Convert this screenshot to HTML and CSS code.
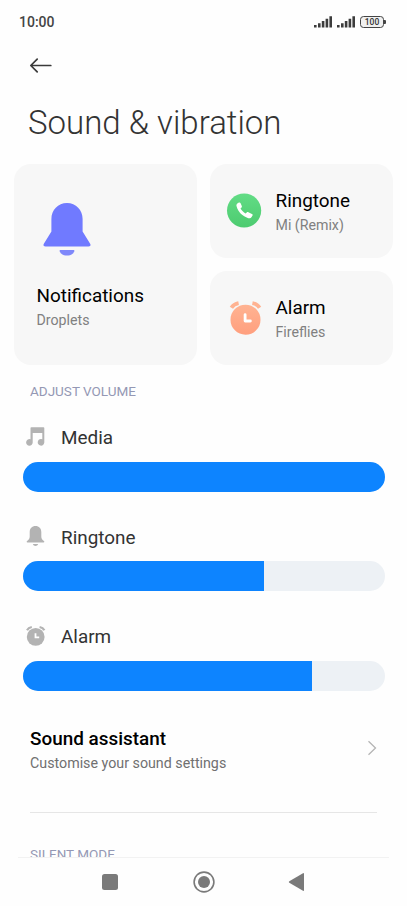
FILE: index.html
```html
<!DOCTYPE html>
<html lang="en">
<head>
    <meta charset="UTF-8">
    <meta name="viewport" content="width=device-width, initial-scale=1.0">
    <title>Sound &amp; vibration</title>
    <link rel="stylesheet" href="styles.css">
</head>
<body>
    <div class="statusbar">
        <span class="clock">10:00</span>
        <svg class="signal" width="18" height="12" viewBox="0 0 18 12">
            <path d="M0 9h2.600v2.500H0zM4 7.200h2.600v4.300H4zM7.800 5h2.600v6.500H7.800zM11.600 2.700h2.600v8.800h-2.600zM15.400.3H18v11.200h-2.600z"/>
        </svg>
        <svg class="signal" width="18" height="12" viewBox="0 0 18 12">
            <path d="M0 9h2.600v2.500H0zM4 7.200h2.600v4.300H4zM7.800 5h2.600v6.500H7.800zM11.600 2.700h2.600v8.800h-2.600zM15.400.3H18v11.200h-2.600z"/>
        </svg>
        <span class="battery">100</span>
        <span class="battery-tip"></span>
    </div>

    <div class="topbar">
        <svg width="24" height="18" viewBox="0 0 24 18">
            <path d="M22.800 8.500H3M9.200 2.100L2.800 8.500l6.400 6.400"/>
        </svg>
    </div>

    <main class="content">
        <h1>Sound &amp; vibration</h1>

        <div class="cards">
            <div class="card card-large">
                <svg width="48" height="54" viewBox="0 0 48 54">
                    <path fill="#707aff" d="M24 0C15 0 8.400 7 8.400 16v12.500L1 40.600C-.3 42.400.8 43.500 2.600 43.500h42.800c1.800 0 2.900-1.100 1.600-2.900L39.600 28.500V16C39.600 7 33 0 24 0z"/>
                    <path fill="#7f88fa" d="M17.500 47h13c.8 0 1 .5.8 1.200-.9 3-3.900 4.400-7.300 4.400s-6.400-1.400-7.300-4.400c-.2-.7 0-1.200.8-1.200z"/>
                </svg>
                <div class="card-name">Notifications</div>
                <div class="card-value">Droplets</div>
            </div>
            <div class="card">
                <svg width="36" height="36" viewBox="0 0 36 36">
                    <defs>
                        <linearGradient id="green" x1="0" y1="0" x2="0" y2="1">
                            <stop offset="0" stop-color="#62dc85"/>
                            <stop offset="1" stop-color="#4dcb70"/>
                        </linearGradient>
                    </defs>
                    <g transform="translate(.4 -1)">
                        <circle cx="17.700" cy="16.500" r="17.100" fill="url(#green)"/>
                        <path fill="#fff" d="M11.300 9.300l1.200-.7c.7-.4 1.400-.1 1.700.6l1.200 2.800c.3.700.1 1.300-.5 1.800l-.8.7c1.300 2 3 3.700 5.100 4.900l1.100-1c.5-.5 1.100-.5 1.700-.2l3.500 1.700c.8.400 1 1 .6 1.700l-.9 1.500c-.7 1.100-1.900 1.500-3.300 1.100C16.200 22.500 11.600 18 10.100 12.100c-.3-1.200.2-2.200 1.200-2.800z"/>
                    </g>
                </svg>
                <div>
                    <div class="card-name">Ringtone</div>
                    <div class="card-value">Mi (Remix)</div>
                </div>
            </div>
            <div class="card">
                <svg width="36" height="36" viewBox="0 0 36 36">
                    <defs>
                        <linearGradient id="orange" x1="0" y1="0" x2="0" y2="1">
                            <stop offset="0" stop-color="#ffb392"/>
                            <stop offset="1" stop-color="#ff9f7e"/>
                        </linearGradient>
                    </defs>
                    <g transform="translate(.5 -1)">
                        <circle cx="19" cy="18.700" r="15" fill="url(#orange)"/>
                        <path class="alarm-ears" d="M4.900 6.800Q7.200 3 12.100 2.100M33.100 6.800Q30.800 3 25.900 2.100"/>
                        <path class="alarm-hands" d="M18.600 13.600v6.400h5.300"/>
                    </g>
                </svg>
                <div>
                    <div class="card-name">Alarm</div>
                    <div class="card-value">Fireflies</div>
                </div>
            </div>
        </div>

        <h2>ADJUST VOLUME</h2>

        <div class="volume">
            <div class="volume-label">
                <svg width="20" height="20" viewBox="0 0 20 20">
                    <path d="M4.500 0Q4.500-.8 5.300-.8h12.200q.8 0 .8.800v14.500a3.300 3.300 0 1 1-2-3.200V5H6.700v9.500a3.300 3.300 0 1 1-2.200-3.200z"/>
                </svg>
                <span>Media</span>
            </div>
            <div class="bar"><div class="fill" style="width: 100%"></div></div>
        </div>
        <div class="volume">
            <div class="volume-label">
                <svg width="20" height="20" viewBox="0 0 20 20">
                    <path d="M9.500-1C6-1 3.700 1.500 3.700 5v4.500c0 2-.8 3-2.600 4.500-.8.700-.5 1.500.4 1.500h16c.9 0 1.200-.8.400-1.500-1.800-1.500-2.600-2.500-2.600-4.500V5C15.300 1.500 13-1 9.500-1zM6.800 17h5.400c-.4 1.200-1.500 1.900-2.700 1.900s-2.300-.7-2.700-1.900z"/>
                </svg>
                <span>Ringtone</span>
            </div>
            <div class="bar"><div class="fill" style="width: 66.67%"></div></div>
        </div>
        <div class="volume">
            <div class="volume-label">
                <svg width="20" height="20" viewBox="0 0 20 20">
                    <circle cx="9.700" cy="9.900" r="8.900"/>
                    <path class="ears" d="M1 3.200Q2.400.7 5.800 0M18.400 3.200Q17 .7 13.600 0"/>
                    <path class="hands" d="M9.500 6.200v4.200h3.700"/>
                </svg>
                <span>Alarm</span>
            </div>
            <div class="bar"><div class="fill" style="width: 80%"></div></div>
        </div>

        <div class="assistant">
            <div>
                <div class="assistant-name">Sound assistant</div>
                <div class="assistant-text">Customise your sound settings</div>
            </div>
            <svg width="10" height="16" viewBox="0 0 10 16">
                <path d="M1.500 1.300L8.500 8l-7 6.700"/>
            </svg>
        </div>

        <h2 class="silent">SILENT MODE</h2>
    </main>

    <nav class="navbar">
        <svg width="18" height="18" viewBox="0 0 18 18">
            <rect x="1" y="1" width="16" height="16" rx="2.500"/>
        </svg>
        <svg width="22" height="22" viewBox="0 0 22 22">
            <circle class="ring" cx="11" cy="11" r="9.900"/>
            <circle cx="11" cy="11" r="6"/>
        </svg>
        <svg width="18" height="20" viewBox="0 0 18 20">
            <path d="M.3 9.200L14 1.200q1-.5 1 .6v16.400q0 1.100-1 .6L.3 10.800q-1.100-.8 0-1.600z"/>
        </svg>
    </nav>
</body>
</html>
```
FILE: styles.css
```css
* {
    box-sizing: border-box;
}
body {
    margin: 0;
    height: 906px;
    display: flex;
    flex-direction: column;
    overflow: hidden;
    background-color: #fefefe;
    color: #333;
    font-family: Roboto, sans-serif;
}
svg {
    display: block;
    flex-shrink: 0;
    overflow: visible;
}
h1, h2 {
    margin: 0;
}
.statusbar {
    display: flex;
    align-items: center;
    height: 44px;
    padding: 0 21px 0 19px;
    flex-shrink: 0;
}
.clock {
    margin-right: auto;
    font-size: 14px;
    font-weight: 500;
    color: #444;
    line-height: 20px;
}
.signal {
    margin-right: 5px;
    fill: #3c3c3c;
}
.battery {
    width: 24px;
    height: 12px;
    border: 1px solid #444;
    border-radius: 3.5px;
    font-size: 8.5px;
    font-weight: 500;
    line-height: 10px;
    text-align: center;
    background-color: #f0f0f0;
}
.battery-tip {
    width: 2px;
    height: 4px;
    background-color: #444;
    border-radius: 0 1px 1px 0;
}
.topbar {
    height: 43px;
    padding: 0 28px;
    display: flex;
    align-items: center;
    flex-shrink: 0;
}
.topbar svg {
    fill: none;
    stroke: #3a3a3a;
    stroke-width: 1.7;
    stroke-linecap: round;
    stroke-linejoin: round;
}
.content {
    flex: 1;
    min-height: 0;
    overflow: hidden;
}
h1 {
    padding: 14px 28px 0;
    font-size: 33px;
    font-weight: 300;
    line-height: 44px;
}
.cards {
    display: grid;
    grid-template-columns: 183px 183px;
    grid-template-rows: 94px 94px;
    gap: 13.5px;
    margin: 18.5px 13.5px 0;
}
.card {
    display: flex;
    align-items: center;
    gap: 13.5px;
    padding: 4px 16px 0;
    border-radius: 17px;
    background-color: #f7f7f7;
}
.card-large {
    display: block;
    grid-row: span 2;
    padding: 39px 23px 0;
}
.card-large svg {
    margin: 0 0 27px 6px;
}
.card-name {
    font-size: 18.9px;
    line-height: 24px;
    color: #000;
}
.card-value {
    font-size: 14.2px;
    line-height: 24px;
    color: #808080;
}
.alarm-ears {
    fill: none;
    stroke: #ffb392;
    stroke-width: 3.8;
}
.alarm-hands {
    fill: none;
    stroke: #fff;
    stroke-width: 2.8;
    stroke-linejoin: round;
    stroke-linecap: round;
}
h2 {
    padding: 0 30px;
    margin-top: 17px;
    font-size: 13.5px;
    font-weight: 400;
    line-height: 18px;
    color: #9498b4;
}
.volume {
    margin: 0 22.5px 31.6px;
}
h2 + .volume {
    margin-top: 23.5px;
}
.volume-label {
    display: flex;
    align-items: center;
    gap: 15.5px;
    height: 28px;
    padding-left: 3px;
    margin-bottom: 10px;
    font-size: 18.9px;
}
.volume-label svg {
    fill: #b3b3b3;
}
.ears {
    fill: none;
    stroke: #b3b3b3;
    stroke-width: 2.2;
}
.hands {
    fill: none;
    stroke: #fff;
    stroke-width: 1.8;
}
.bar {
    height: 30px;
    border-radius: 15px;
    overflow: hidden;
    background-color: #edf1f5;
}
.fill {
    height: 100%;
    background-color: #0d84ff;
}
.assistant {
    display: flex;
    justify-content: space-between;
    align-items: flex-start;
    height: 86px;
    margin: 36.6px 30px 0;
    border-bottom: 1px solid #e6e6e6;
}
.assistant svg {
    margin: 13px 0 0;
    fill: none;
    stroke: #b5b5b5;
    stroke-width: 1.3;
}
.assistant-name {
    font-size: 18.9px;
    font-weight: 500;
    line-height: 24px;
    color: #000;
}
.assistant-text {
    font-size: 14.25px;
    line-height: 24px;
    color: #707070;
}
h2.silent {
    margin-top: 32px;
}
.navbar {
    display: flex;
    align-items: center;
    justify-content: center;
    gap: 74px;
    height: 49px;
    margin: 0 18px;
    border-top: 1px solid #f2f2f2;
    flex-shrink: 0;
}
.navbar svg {
    fill: #7a7a7a;
}
.navbar .ring {
    fill: none;
    stroke: #7a7a7a;
    stroke-width: 1.6;
}
```
